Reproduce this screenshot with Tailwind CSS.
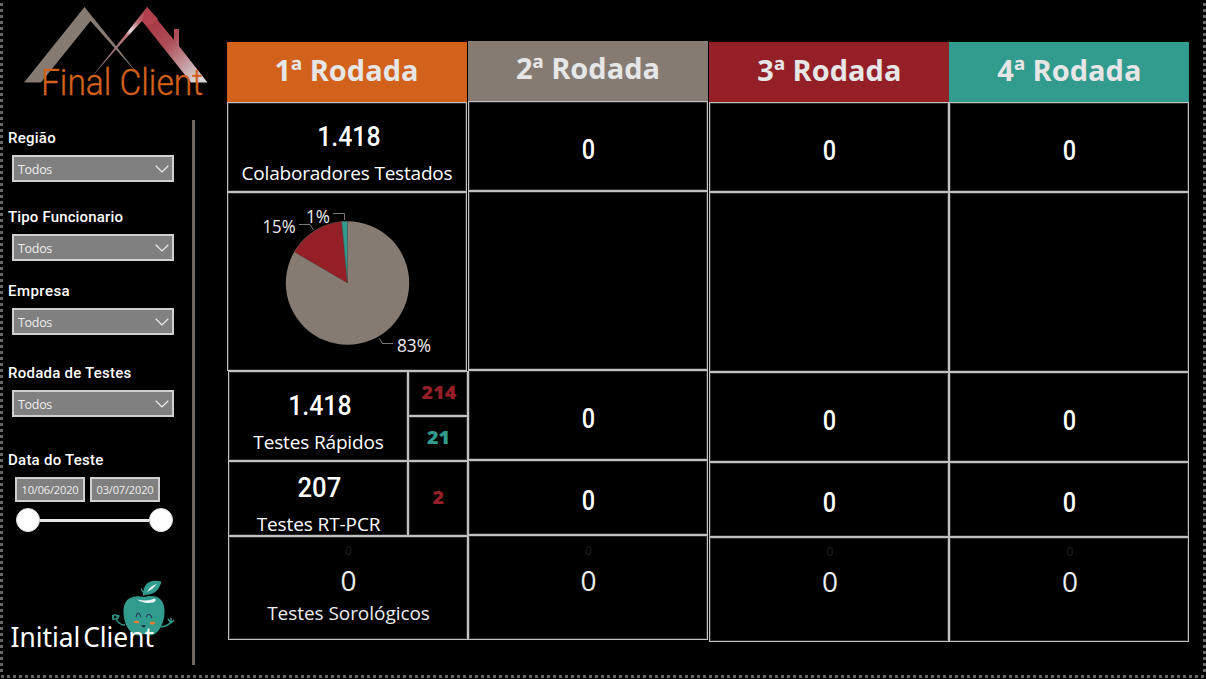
<!DOCTYPE html>
<html lang="pt-BR">
<head>
<meta charset="utf-8">
<title>Rodadas de Testes</title>
<script src="https://cdn.jsdelivr.net/npm/@tailwindcss/browser@4"></script>
</head>
<body class="bg-black">
<div class="relative flex h-[679px] w-[1206px] overflow-hidden bg-black font-['Open_Sans','Noto_Sans',sans-serif] text-white">
  <div class="absolute left-0 top-[3px] h-[672px] w-[3px] bg-[repeating-linear-gradient(180deg,#666_0_3px,transparent_3px_6px)]"></div>
  <div class="absolute right-0 top-[3px] h-[672px] w-[3px] bg-[repeating-linear-gradient(180deg,#666_0_3px,transparent_3px_6px)]"></div>
  <div class="absolute left-px top-[675px] h-[3px] w-[1205px] bg-[repeating-linear-gradient(90deg,#666_0_3px,transparent_3px_6px)]"></div>

  <aside class="flex w-[226.500px] shrink-0 flex-col">
    <svg class="h-[120px] w-[220px] shrink-0" viewBox="0 0 220 120">
      <defs>
        <linearGradient id="roof" x1="0" y1="0" x2="0.8" y2="1"><stop offset="0" stop-color="#a52a35"/><stop offset=".5" stop-color="#ad4f58"/><stop offset="1" stop-color="#d8d5d6"/></linearGradient>
        <linearGradient id="beam" x1="1" y1="0" x2="0" y2="1"><stop offset="0" stop-color="#9b2530"/><stop offset=".25" stop-color="#bd6a72"/><stop offset=".37" stop-color="#eadfe0"/><stop offset=".43" stop-color="#b9717a"/><stop offset="1" stop-color="#9c8a8c"/></linearGradient>
      </defs>
      <path d="M84.500 7 L24 82.500 H41 L90.500 21 L136 72 L144 82 L116 46 Z" fill="#857b72"/>
      <path d="M147 7 L114 49 L90 79 L118 47 L142 21 L147 25 L158 19 Z" fill="url(#beam)"/>
      <path d="M147 7 L174 40 V29 H179 V46 L207.500 82.500 H191 L142 21 Z" fill="url(#roof)"/>
      <path d="M142 21 L147 7 L158 20 Q152 25 147 26 Z" fill="#c45661" opacity=".4"/>
      <text x="41" y="95" textLength="162" lengthAdjust="spacingAndGlyphs" font-family="Roboto, sans-serif" font-weight="300" font-size="37" fill="#d2611c" stroke="#d2611c" stroke-width=".4">Final Client</text>
    </svg>
    <div class="flex h-[545px] w-[195px] flex-col border-r-[3px] border-[#6f655d]">
      <h3 class="mt-[8px] h-5 pl-2 font-['Roboto'] text-[15px] font-medium leading-5 tracking-[.25px]">Região</h3>
      <div class="ml-3 mt-[7px] flex h-[27px] w-[162px] items-center justify-between border-2 border-[#d0d0d0] bg-[#808080] pl-1 pr-[3px] text-[12.500px] tracking-[-.3px] text-[#eee]"><span class="pt-[3px]">Todos</span><svg class="h-2 w-3.5" viewBox="0 0 14 8" fill="none" stroke="#eee" stroke-width="1.200"><path d="M.7.8 7 7 13.300.8"/></svg></div>
      <h3 class="mt-[25px] h-5 pl-2 font-['Roboto'] text-[15px] font-medium leading-5 tracking-[.15px]">Tipo Funcionario</h3>
      <div class="ml-3 mt-[7px] flex h-[27px] w-[162px] items-center justify-between border-2 border-[#d0d0d0] bg-[#808080] pl-1 pr-[3px] text-[12.500px] tracking-[-.3px] text-[#eee]"><span class="pt-[4px]">Todos</span><svg class="h-2 w-3.5" viewBox="0 0 14 8" fill="none" stroke="#eee" stroke-width="1.200"><path d="M.7.8 7 7 13.300.8"/></svg></div>
      <h3 class="mt-[20px] h-5 pl-2 font-['Roboto'] text-[15px] font-medium leading-5 tracking-[.45px]">Empresa</h3>
      <div class="ml-3 mt-[7px] flex h-[27px] w-[162px] items-center justify-between border-2 border-[#d0d0d0] bg-[#808080] pl-1 pr-[3px] text-[12.500px] tracking-[-.3px] text-[#eee]"><span class="pt-[3px]">Todos</span><svg class="h-2 w-3.5" viewBox="0 0 14 8" fill="none" stroke="#eee" stroke-width="1.200"><path d="M.7.8 7 7 13.300.8"/></svg></div>
      <h3 class="mt-[28px] h-5 pl-2 font-['Roboto'] text-[15px] font-medium leading-5 tracking-[.25px]">Rodada de Testes</h3>
      <div class="ml-3 mt-[7px] flex h-[27px] w-[162px] items-center justify-between border-2 border-[#d0d0d0] bg-[#808080] pl-1 pr-[3px] text-[12.500px] tracking-[-.3px] text-[#eee]"><span class="pt-[4px]">Todos</span><svg class="h-2 w-3.5" viewBox="0 0 14 8" fill="none" stroke="#eee" stroke-width="1.200"><path d="M.7.8 7 7 13.300.8"/></svg></div>
      <h3 class="mt-[33px] h-5 pl-2 font-['Roboto'] text-[15px] font-medium leading-5 tracking-[.25px]">Data do Teste</h3>
      <div class="ml-[15px] mt-[7px] flex gap-[5px] text-[11px] tracking-[-.15px] text-[#eee]">
        <div class="flex h-[25px] w-[70px] items-center justify-center border-2 border-[#d0d0d0] bg-[#808080] pt-px">10/06/2020</div>
        <div class="flex h-[25px] w-[70px] items-center justify-center border-2 border-[#d0d0d0] bg-[#808080] pt-px">03/07/2020</div>
      </div>
      <div class="ml-[16px] mt-[6px] flex h-6 w-[157px] items-center">
        <div class="size-6 shrink-0 rounded-full border border-[#ddd] bg-white"></div>
        <div class="h-[3px] grow bg-[#e6e6e6]"></div>
        <div class="size-6 shrink-0 rounded-full border border-[#ddd] bg-white"></div>
      </div>
      <svg class="mt-[37px] h-[90px] w-[190px] shrink-0" viewBox="0 570 190 90">
        <g fill="none" stroke="#319b8e" stroke-width="1.300">
          <path d="M125 626 Q119 626 116 620 M161 628 Q168 627 171 623 M144 597 Q144 593 141 590"/>
          <circle cx="115" cy="618" r="2.200"/><path d="M117 616 L119 617 L117.500 620 M113 616 V621 M171 624 L168 620 M171 624 L171 619 M171 624 L174 621"/>
        </g>
        <path d="M144 598 C132 595 124 600 123.500 611 C123 626 131 636 138 636.500 Q144 634 150 636.500 C158 636 165 625 164.500 611 C164 599 156 595 144 598Z" fill="#319b8e"/>
        <path d="M143 596 C143 585 149 580 161.500 582.500 C159 592 154 596 143 596Z" fill="#319b8e"/>
        <path d="M147 593 Q150 587 157 585 Q153 590 147 593Z M137 600.500 Q147 603 155 599.500 Q157 602 153 603.500 Q143 605 137 600.500Z" fill="#eef7f5"/>
        <g fill="none" stroke="#233652" stroke-width="1.100"><path d="M136 618 Q138 610 141 618 M146 618 Q149 612 152 619"/></g>
        <path d="M141 626 H146 Q144 631 141 626Z" fill="#233652"/>
        <ellipse cx="136.500" cy="623" rx="2.800" ry="1.300" fill="#ee8130"/><ellipse cx="152.500" cy="624" rx="2.800" ry="1.500" fill="#ee8130"/>
        <text x="10.500" y="648" textLength="143.500" lengthAdjust="spacingAndGlyphs" font-family="Noto Sans, sans-serif" font-size="28" fill="#fff"><tspan>Initial</tspan><tspan dx="3">Client</tspan></text>
      </svg>
    </div>
  </aside>

  <main class="flex items-start">
    <section class="flex w-[241px] flex-col pt-[42px]">
      <h2 class="h-[60px] w-[240px] bg-[#d2611c] text-center text-[29px] font-bold leading-[55px] text-[#e6e6e6]">1ª Rodada</h2>
      <div class="h-[90px] w-[240px] border border-[#c0c0c0] pt-[18px] text-center shadow-[inset_0_0_0_1px_#2c2c2c]">
        <p class="scale-x-[.92] pl-1 font-['Roboto'] text-[27px] font-medium leading-8">1.418</p>
        <p class="mt-[6px] pl-px text-[19px] leading-7 tracking-[-.2px]">Colaboradores Testados</p>
      </div>
      <div class="h-[179px] w-[240px] border border-[#c0c0c0] shadow-[inset_0_0_0_1px_#2c2c2c]">
        <svg class="h-[176px] w-[238px]" viewBox="228 193 238 176" font-family="Open Sans, sans-serif" font-size="17.500" fill="#eee">
          <circle cx="347.500" cy="283" r="61.700" fill="#857b72"/>
          <path d="M347.500 283 L294.500 252 A61.700 61.700 0 0 1 341.700 221.500Z" fill="#951f27" stroke="#5a3d38" stroke-width=".5"/>
          <path d="M347.500 283 L341.700 221.500 A61.700 61.700 0 0 1 347.500 221.300Z" fill="#319b8e" stroke="#444" stroke-width=".5"/>
          <g fill="none" stroke="#777"><path d="M299 224.500H310L313.500 230M333 213.500H344.500V220M379 338L382.500 343.500H393"/></g>
          <text x="262.500" y="233" textLength="33" lengthAdjust="spacingAndGlyphs">15%</text>
          <text x="306" y="223" textLength="24" lengthAdjust="spacingAndGlyphs">1%</text>
          <text x="397" y="352" textLength="34" lengthAdjust="spacingAndGlyphs">83%</text>
        </svg>
      </div>
      <div class="ml-[1.500px] flex w-[240px]">
        <div class="h-[90px] w-[180px] border border-[#c0c0c0] pt-[18px] text-center shadow-[inset_0_0_0_1px_#2c2c2c]">
          <p class="scale-x-[.92] pl-1 font-['Roboto'] text-[27px] font-medium leading-8">1.418</p>
          <p class="mt-[6px] pl-px text-[19px] leading-7 tracking-[-.15px]">Testes Rápidos</p>
        </div>
        <div class="w-[60px] text-center text-[18px] font-extrabold">
          <div class="h-[45px] border border-[#c0c0c0] leading-[41px] text-[#951f27] shadow-[inset_0_0_0_1px_#2c2c2c]"><span class="inline-block scale-x-110 pl-px">214</span></div>
          <div class="h-[45px] border border-[#c0c0c0] leading-[41px] text-[#319b8e] shadow-[inset_0_0_0_1px_#2c2c2c]"><span class="inline-block scale-x-110 pl-px">21</span></div>
        </div>
      </div>
      <div class="ml-[1.500px] flex w-[240px]">
        <div class="h-[75px] w-[180px] border border-[#c0c0c0] pt-[10px] text-center shadow-[inset_0_0_0_1px_#2c2c2c]">
          <p class="scale-x-95 pl-[3px] font-['Roboto'] text-[27px] font-medium leading-8">207</p>
          <p class="mt-[6px] h-[25px] pl-px text-[19px] leading-7 tracking-[-.1px]">Testes RT-PCR</p>
        </div>
        <div class="h-[75px] w-[60px] border border-[#c0c0c0] text-center text-[18px] font-extrabold leading-[71px] text-[#951f27] shadow-[inset_0_0_0_1px_#2c2c2c]"><span class="inline-block scale-x-110 pl-px">2</span></div>
      </div>
      <div class="ml-[1.500px] h-[104px] w-[240px] border border-[#c0c0c0] pt-[6px] text-center text-[#eee] shadow-[inset_0_0_0_1px_#2c2c2c]">
        <p class="pl-px text-[12px] leading-4 text-[#222]">0</p>
        <p class="mt-[3px] pl-px text-[28px] leading-9">0</p>
        <p class="mt-px pl-px text-[19px] leading-7 tracking-[-.05px]">Testes Sorológicos</p>
      </div>
    </section>

    <section class="w-[241.500px] pl-[.5px] pt-[41px] text-center">
      <h2 class="h-[60px] w-[240px] bg-[#857b72] text-[29px] font-bold leading-[54px] text-[#e6e6e6]">2ª Rodada</h2>
      <div class="h-[90px] w-[240px] border border-[#c0c0c0] pt-[32px] font-['Roboto'] text-[27px] font-medium leading-8 shadow-[inset_0_0_0_1px_#2c2c2c]"><p class="scale-x-[.87] pl-px">0</p></div>
      <div class="h-[179px] w-[240px] border border-[#c0c0c0] shadow-[inset_0_0_0_1px_#2c2c2c]"></div>
      <div class="h-[90px] w-[240px] border border-[#c0c0c0] pt-[32px] font-['Roboto'] text-[27px] font-medium leading-8 shadow-[inset_0_0_0_1px_#2c2c2c]"><p class="scale-x-[.87] pl-px">0</p></div>
      <div class="h-[75px] w-[240px] border border-[#c0c0c0] pt-[24px] font-['Roboto'] text-[27px] font-medium leading-8 shadow-[inset_0_0_0_1px_#2c2c2c]"><p class="scale-x-[.87] pl-px">0</p></div>
      <div class="h-[105px] w-[240px] border border-[#c0c0c0] pt-[7px] text-[#eee] shadow-[inset_0_0_0_1px_#2c2c2c]">
        <p class="pl-px text-[12px] leading-4 text-[#222]">0</p>
        <p class="mt-[3px] pl-px text-[28px] leading-9">0</p>
      </div>
    </section>

    <section class="w-[240px] pt-[42px] pl-[.4px] text-center">
      <h2 class="h-[60px] w-[240px] bg-[#951f27] text-[29px] font-bold leading-[55px] text-[#e6e6e6]">3ª Rodada</h2>
      <div class="h-[90px] w-[240px] border border-[#c0c0c0] pt-[32px] font-['Roboto'] text-[27px] font-medium leading-8 shadow-[inset_0_0_0_1px_#2c2c2c]"><p class="scale-x-[.87] pl-px">0</p></div>
      <div class="h-[180px] w-[240px] border border-[#c0c0c0] shadow-[inset_0_0_0_1px_#2c2c2c]"></div>
      <div class="h-[90px] w-[240px] border border-[#c0c0c0] pt-[32px] font-['Roboto'] text-[27px] font-medium leading-8 shadow-[inset_0_0_0_1px_#2c2c2c]"><p class="scale-x-[.87] pl-px">0</p></div>
      <div class="h-[75px] w-[240px] border border-[#c0c0c0] pt-[24px] font-['Roboto'] text-[27px] font-medium leading-8 shadow-[inset_0_0_0_1px_#2c2c2c]"><p class="scale-x-[.87] pl-px">0</p></div>
      <div class="h-[105px] w-[240px] border border-[#c0c0c0] pt-[6px] text-[#eee] shadow-[inset_0_0_0_1px_#2c2c2c]">
        <p class="pl-px text-[12px] leading-4 text-[#222]">0</p>
        <p class="mt-[3px] pl-px text-[28px] leading-9">0</p>
      </div>
    </section>

    <section class="w-[241px] pt-[42px] pl-[.4px] text-center">
      <h2 class="h-[60px] w-[240px] bg-[#319b8e] text-[29px] font-bold leading-[55px] text-[#e6e6e6]">4ª Rodada</h2>
      <div class="h-[90px] w-[240px] border border-[#c0c0c0] pt-[32px] font-['Roboto'] text-[27px] font-medium leading-8 shadow-[inset_0_0_0_1px_#2c2c2c]"><p class="scale-x-[.87] pl-px">0</p></div>
      <div class="h-[180px] w-[240px] border border-[#c0c0c0] shadow-[inset_0_0_0_1px_#2c2c2c]"></div>
      <div class="h-[90px] w-[240px] border border-[#c0c0c0] pt-[32px] font-['Roboto'] text-[27px] font-medium leading-8 shadow-[inset_0_0_0_1px_#2c2c2c]"><p class="scale-x-[.87] pl-px">0</p></div>
      <div class="h-[75px] w-[240px] border border-[#c0c0c0] pt-[24px] font-['Roboto'] text-[27px] font-medium leading-8 shadow-[inset_0_0_0_1px_#2c2c2c]"><p class="scale-x-[.87] pl-px">0</p></div>
      <div class="h-[105px] w-[240px] border border-[#c0c0c0] pt-[6px] text-[#eee] shadow-[inset_0_0_0_1px_#2c2c2c]">
        <p class="pl-px text-[12px] leading-4 text-[#222]">0</p>
        <p class="mt-[3px] pl-px text-[28px] leading-9">0</p>
      </div>
    </section>
  </main>
</div>
</body>
</html>
